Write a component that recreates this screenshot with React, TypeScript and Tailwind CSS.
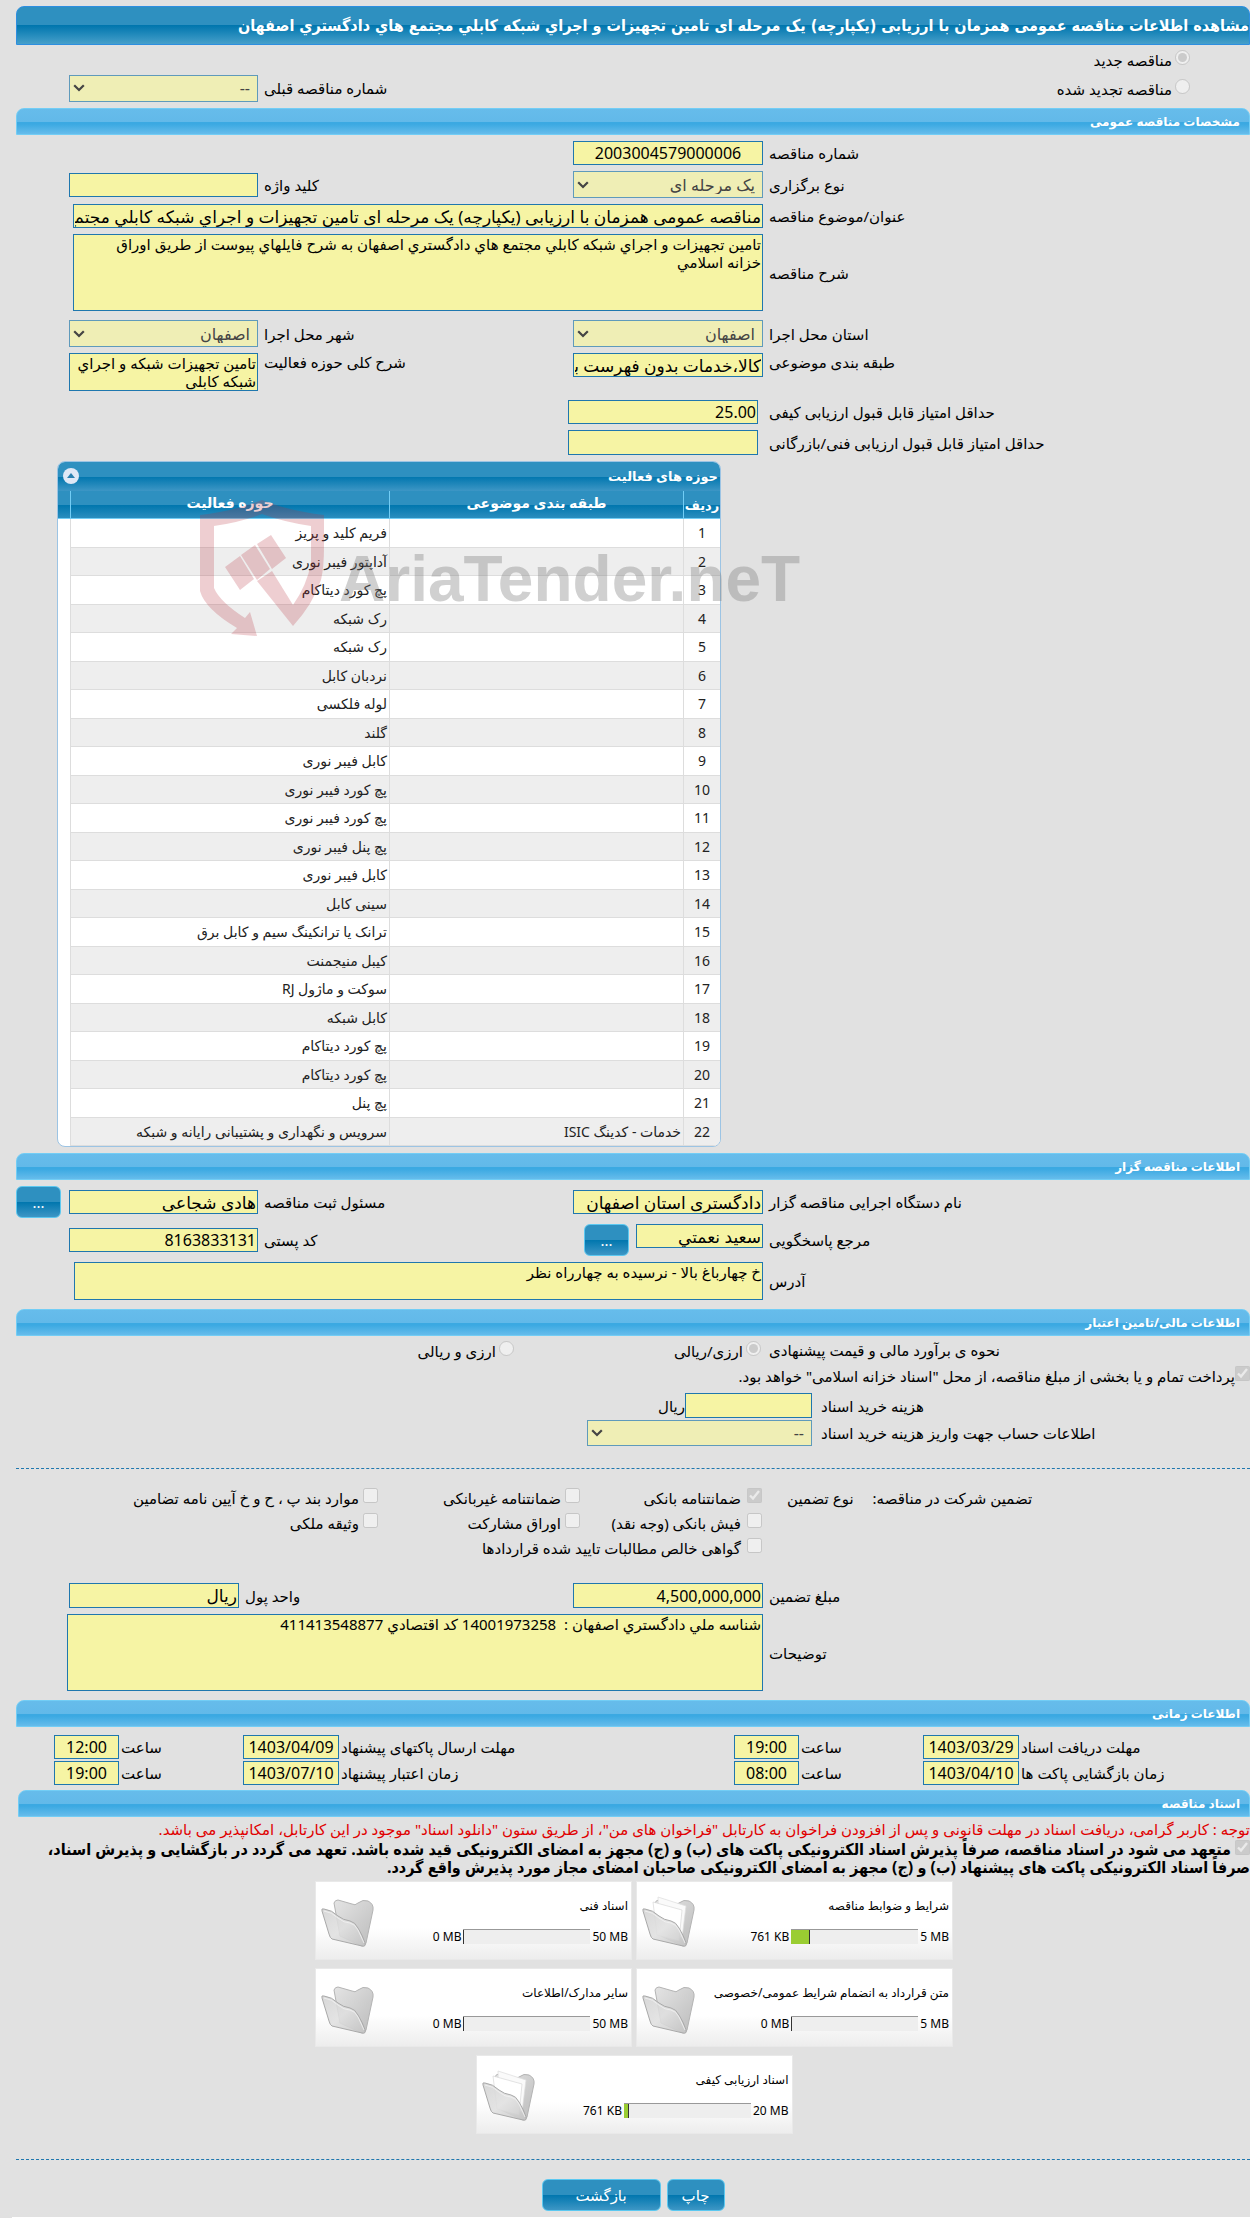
import type { ReactNode } from "react";

const FORM_GRID =
  "grid grid-cols-[minmax(0,487fr)_190px_minmax(0,315fr)_189px_53px] items-center";
const FIELD =
  "block w-full rounded-none border border-[#1f77ae] bg-[#f6f4a4] px-px text-black outline-none";
const AREA =
  "block w-full resize-none overflow-hidden rounded-none border border-[#1f77ae] bg-[#f6f4a4] ps-px pe-1.5 text-[15px] leading-[18px] text-black outline-none";
const BLUE_BUTTON =
  "h-8 rounded-md border border-[#5cc8f0] bg-[linear-gradient(#2e90c0_0,#2e90c0_50%,#0076ae_50%,#3d96c5_100%)] text-[15px] text-white";

function SectionTitle({ children, className = "" }: { children: ReactNode; className?: string }) {
  return (
    <h2
      className={`flex h-[27px] items-center rounded-t-lg border border-[#72cdf5] bg-[linear-gradient(#66bceb_0,#62b9e9_50%,#3ba9e2_52%,#3ba9e2_60%,#66bceb_100%)] px-[9px] text-[12px] font-bold text-white ${className}`}
    >
      {children}
    </h2>
  );
}

function Label({ htmlFor, children, className = "pe-1.5" }: { htmlFor: string; children: ReactNode; className?: string }) {
  return (
    <label htmlFor={htmlFor} className={`block text-end whitespace-nowrap ${className}`}>
      {children}
    </label>
  );
}

function Field({ id, value = "", className = "h-6 text-[16px]" }: { id: string; value?: string; className?: string }) {
  return <input id={id} type="text" readOnly defaultValue={value} className={`${FIELD} ${className}`} />;
}

function TextField({ id, value, className = "h-6" }: { id: string; value: string; className?: string }) {
  return <Field id={id} value={value} className={`text-[17px] ${className}`} />;
}

function Select({ id, value, className = "h-[27px]" }: { id: string; value: string; className?: string }) {
  return (
    <div className="relative">
      <select
        id={id}
        disabled
        className={`block w-full appearance-none rounded-none border border-[#5f9abb] bg-[#efeeb5] ps-[7px] pe-5 text-[16px] text-[#444] opacity-100 ${className}`}
      >
        <option>{value}</option>
      </select>
      <svg viewBox="0 0 12 8" className="pointer-events-none absolute top-1/2 left-1 h-2 w-3 -translate-y-1/2">
        <path d="M1.2 1.2 6 6l4.800-4.800" fill="none" stroke="#444" strokeWidth="2.200" />
      </svg>
    </div>
  );
}

function Choice({
  id,
  type = "checkbox",
  checked = false,
  name,
  children,
  className = "gap-1.5",
}: {
  id: string;
  type?: "checkbox" | "radio";
  checked?: boolean;
  name?: string;
  children: ReactNode;
  className?: string;
}) {
  return (
    <div className={`flex items-start whitespace-nowrap ${className}`}>
      <input id={id} name={name} type={type} disabled defaultChecked={checked} className="m-0 h-[15px] w-[15px] shrink-0" />
      <label htmlFor={id} className="pt-px leading-[18px]">
        {children}
      </label>
    </div>
  );
}

const ACTIVITIES: [string, string][] = [
  ["", "فریم کلید و پریز"],
  ["", "آداپتور فیبر نوری"],
  ["", "پچ کورد دیتاکام"],
  ["", "رک شبکه"],
  ["", "رک شبکه"],
  ["", "نردبان کابل"],
  ["", "لوله فلکسی"],
  ["", "گلند"],
  ["", "کابل فیبر نوری"],
  ["", "پچ کورد فیبر نوری"],
  ["", "پچ کورد فیبر نوری"],
  ["", "پچ پنل فیبر نوری"],
  ["", "کابل فیبر نوری"],
  ["", "سینی کابل"],
  ["", "ترانک یا ترانکینگ سیم و کابل برق"],
  ["", "کیبل منیجمنت"],
  ["", "سوکت و ماژول RJ"],
  ["", "کابل شبکه"],
  ["", "پچ کورد دیتاکام"],
  ["", "پچ کورد دیتاکام"],
  ["", "پچ پنل"],
  ["خدمات - کدینگ ISIC", "سرویس و نگهداری و پشتیبانی رایانه و شبکه"],
];

function Watermark() {
  return (
    <div dir="ltr" className="pointer-events-none absolute top-[38px] left-[142px] flex items-start" aria-hidden="true">
      <svg viewBox="0 0 128 140" className="h-[140px] w-32 shrink-0">
        <g fill="#b8323f" fillOpacity="0.24">
          <path d="M1 16Q36 12 63 1q27 11 62 15v31q0 22-3 34-8 24-28 46L58 82l15-10 21 34q14-20 18-42V27Q85 23 63 15 42 23 15 27v62q6 14 31 30l5-6 7 24-26-2 6-6Q6 110 1 92Z" />
          <path d="m26 68 15-11 14 23-14 11ZM42 56l14-10 15 24-13 11ZM58 45l14-9 15 23-14 11Z" />
        </g>
      </svg>
      <span className="mt-12 ml-3 font-['Liberation_Sans',sans-serif] text-[64px] leading-[64px] font-bold text-[#777]/35">
        AriaTender.neT
      </span>
    </div>
  );
}

function ActivityTable() {
  return (
    <div className="relative mt-1.5 mr-auto ml-[41px] w-[664px]">
      <div className="overflow-hidden rounded-lg border border-[#9cc4e4] bg-white">
        <div className="flex h-[29px] items-center justify-between bg-[linear-gradient(#2e90c0_0,#2e90c0_50%,#0076ae_50%,#3d96c5_100%)] ps-0.5 pe-[5px] pb-0.5 text-[13px] font-bold text-white">
          <span>حوزه های فعالیت</span>
          <button type="button" aria-label="بستن جدول" className="flex h-4 w-4 items-center justify-center rounded-full bg-[#dfe8f6]">
            <svg viewBox="0 0 8 5" className="h-[5px] w-2">
              <path d="M4 0 8 5H0Z" fill="#2a80b0" />
            </svg>
          </button>
        </div>
        <table className="w-full table-fixed border-separate border-spacing-0">
          <colgroup>
            <col className="w-[37px]" />
            <col className="w-[294px]" />
            <col />
            <col className="w-3" />
          </colgroup>
          <thead>
            <tr className="h-7 bg-[linear-gradient(#2e90c0_0,#2e90c0_50%,#0076ae_50%,#2e90c0_100%)] text-[14px] leading-4 text-white">
              <th className="border-b border-l border-[#72cdf5] p-0 text-[13px] font-bold">ردیف</th>
              <th className="border-b border-l border-[#72cdf5] p-0 pb-1 font-bold">طبقه بندی موضوعی</th>
              <th className="border-b border-l border-[#72cdf5] p-0 pb-1 font-bold">حوزه فعالیت</th>
              <th className="border-b border-[#72cdf5] p-0" />
            </tr>
          </thead>
          <tbody className="text-[14px] leading-4 text-[#222]">
            {ACTIVITIES.map(([category, activity], i) => {
              const cell = `border-b border-l border-[#ddd] p-0 ${i % 2 === 1 ? "bg-[#eee]" : "bg-white"}`;
              return (
                <tr key={i} className="h-[29px] even:h-7">
                  <td className={`${cell} text-center`}>{i + 1}</td>
                  <td className={`${cell} px-0.5`}>{category}</td>
                  <td className={`${cell} px-0.5`}>{activity}</td>
                  <td className="p-0" />
                </tr>
              );
            })}
          </tbody>
        </table>
      </div>
      <Watermark />
    </div>
  );
}

function Folder({ full }: { full: boolean }) {
  return (
    <svg viewBox="0 0 58 54" className="h-[54px] w-[58px] shrink-0">
      <defs>
        <linearGradient id="folder-back" x1="0" y1="0" x2="1" y2="1">
          <stop offset="0" stopColor="#e4e4e4" />
          <stop offset="1" stopColor="#bcbcbc" />
        </linearGradient>
        <linearGradient id="folder-front" x1="0" y1="0" x2="1" y2="1">
          <stop offset="0" stopColor="#d2d2d2" />
          <stop offset="0.500" stopColor="#e0e0e0" />
          <stop offset="1" stopColor="#c4c4c4" />
        </linearGradient>
      </defs>
      <path
        d="M14 9q1-3 4-3l14 4q3 2 6-1 5-4 10-2 6 3 5 9l-7 33q-1 3-4 3L20 42Z"
        fill="url(#folder-back)"
        stroke="#b4b4b4"
      />
      {full && (
        <>
          <path d="m17 3 28 9-4 32-23-6Z" fill="#fafafa" stroke="#dcdcdc" strokeWidth="0.700" />
          <path d="m12 8 29 8-3 31-22-6Z" fill="#fff" stroke="#d9d9d9" strokeWidth="0.700" />
        </>
      )}
      <path
        d="M2 17q-1-3 2-2 8 1 14 7 5 4 12 5 5 1 8 7 5 8 7 15 1 4-3 3L12 45q-2-1-3-5Z"
        fill="url(#folder-front)"
        fillOpacity="0.880"
        stroke="#a9a9a9"
      />
      <path d="M4 17q8 1 14 7 6 5 12 5 5 1 8 7l6 13" fill="none" stroke="#f2f2f2" strokeWidth="0.800" />
    </svg>
  );
}

function DocumentCard({ title, used, total, percent }: { title: string; used: string; total: string; percent: number }) {
  return (
    <div className="flex h-[79px] w-[317px] items-center justify-between border border-[#e9e9e9] bg-[linear-gradient(#fff_0,#fff_60%,#ededed_100%)] ps-[3px] pe-1 text-[12px]">
      <div className="flex flex-col gap-3.5">
        <span className="leading-[18px]">{title}</span>
        <div dir="ltr" className="flex items-center justify-end gap-0.5 leading-4">
          <span>{used}</span>
          <div
            role="progressbar"
            aria-label={title}
            aria-valuenow={percent}
            className="h-[15px] w-[127px] border-t border-[#999] bg-[#eee]"
          >
            <div className="h-full min-w-px border-r border-[#333] bg-[#9acd32]" style={{ width: `${percent}%` }} />
          </div>
          <span>{total}</span>
        </div>
      </div>
      <Folder full={percent > 0} />
    </div>
  );
}

function Deadline({ id, label, date, time }: { id: string; label: string; date: string; time: string }) {
  return (
    <>
      <Label htmlFor={`${id}-date`} className="pe-0.5">
        {label}
      </Label>
      <Field id={`${id}-date`} value={date} className="h-6 text-center text-[16px]" />
      <Label htmlFor={`${id}-time`} className="pe-0.5">
        ساعت
      </Label>
      <Field id={`${id}-time`} value={time} className="h-6 text-center text-[16px]" />
    </>
  );
}

export default function App() {
  return (
    <main
      dir="rtl"
      lang="fa"
      className="overflow-hidden bg-[#e1e1e1] pt-1.5 pl-4 font-['Noto_Sans','DejaVu_Sans',sans-serif] text-[15px] leading-[18px] text-black"
    >
      <h1 className="flex h-[39px] items-center overflow-hidden rounded-t-lg border border-[#2d8ee0] bg-[linear-gradient(#2e90c0_0,#2e90c0_50%,#0076ae_50%,#469fca_100%)] font-['DejaVu_Sans_Condensed','DejaVu_Sans',sans-serif] text-[16px] font-bold whitespace-nowrap text-white">
        مشاهده اطلاعات مناقصه عمومی همزمان با ارزیابی (یکپارچه) یک مرحله ای تامین تجهیزات و اجراي شبکه کابلي مجتمع هاي دادگستري اصفهان
      </h1>

      <div className={`${FORM_GRID} h-[29px]`}>
        <div className="ps-[60px]">
          <Choice id="new" type="radio" name="kind" checked className="gap-[3px]">
            مناقصه جدید
          </Choice>
        </div>
      </div>
      <div className={`${FORM_GRID} h-7`}>
        <div className="ps-[60px]">
          <Choice id="renewed" type="radio" name="kind" className="gap-[3px]">
            مناقصه تجدید شده
          </Choice>
        </div>
        <Label htmlFor="previous" className="col-span-2 pe-1.5">
          شماره مناقصه قبلی
        </Label>
        <Select id="previous" value="--" />
      </div>

      <SectionTitle className="mt-1.5">مشخصات مناقصه عمومی</SectionTitle>
      <div className="mt-1.5 flex flex-col gap-1.5">
        <div className={FORM_GRID}>
          <Label htmlFor="number">شماره مناقصه</Label>
          <Field id="number" value="2003004579000006" className="h-6 text-center text-[16px]" />
        </div>
        <div className={FORM_GRID}>
          <Label htmlFor="method">نوع برگزاری</Label>
          <Select id="method" value="یک مرحله ای" />
          <Label htmlFor="keyword">کلید واژه</Label>
          <Field id="keyword" />
        </div>
        <div className={FORM_GRID}>
          <Label htmlFor="subject">عنوان/موضوع مناقصه</Label>
          <div className="col-span-3 pl-1">
            <TextField
              id="subject"
              value="مناقصه عمومی همزمان با ارزیابی (یکپارچه) یک مرحله ای تامین تجهیزات و اجراي شبکه کابلي مجتمع هاي دادگستري اصفهان"
            />
          </div>
        </div>
        <div className={FORM_GRID}>
          <Label htmlFor="description">شرح مناقصه</Label>
          <div className="col-span-3 pl-1">
            <textarea
              id="description"
              readOnly
              className={`${AREA} h-[77px]`}
              defaultValue="تامین تجهیزات و اجراي شبکه کابلي مجتمع هاي دادگستري اصفهان به شرح فایلهاي پیوست از طریق اوراق خزانه اسلامي"
            />
          </div>
        </div>
        <div className={`${FORM_GRID} mt-[3px]`}>
          <Label htmlFor="province">استان محل اجرا</Label>
          <Select id="province" value="اصفهان" />
          <Label htmlFor="city">شهر محل اجرا</Label>
          <Select id="city" value="اصفهان" />
        </div>
        <div className={`${FORM_GRID} items-start`}>
          <Label htmlFor="category">طبقه بندی موضوعی</Label>
          <TextField id="category" value="کالا،خدمات بدون فهرست بها" />
          <Label htmlFor="scope">شرح کلی حوزه فعالیت</Label>
          <textarea id="scope" readOnly className={`${AREA} h-[38px]`} defaultValue="تامین تجهیزات شبکه و اجراي شبکه کابلي" />
        </div>
        <div className={`${FORM_GRID} mt-[3px]`}>
          <Label htmlFor="quality">حداقل امتیاز قابل قبول ارزیابی کیفی</Label>
          <div className="-ml-[5px] pr-[5px]">
            <Field id="quality" value="25.00" />
          </div>
        </div>
        <div className={FORM_GRID}>
          <Label htmlFor="technical">حداقل امتیاز قابل قبول ارزیابی فنی/بازرگانی</Label>
          <div className="-ml-[5px] pr-[5px]">
            <Field id="technical" className="h-[25px]" />
          </div>
        </div>
      </div>

      <ActivityTable />

      <SectionTitle className="mt-1.5">اطلاعات مناقصه گزار</SectionTitle>
      <div className="mt-1.5 flex flex-col gap-1.5">
        <div className={FORM_GRID}>
          <Label htmlFor="agency">نام دستگاه اجرایی مناقصه گزار</Label>
          <TextField id="agency" value="دادگستری استان اصفهان" />
          <Label htmlFor="registrar">مسئول ثبت مناقصه</Label>
          <TextField id="registrar" value="هادی شجاعی" />
          <button type="button" className={`${BLUE_BUTTON} mr-2 w-[45px]`}>
            ...
          </button>
        </div>
        <div className={FORM_GRID}>
          <Label htmlFor="contact">مرجع پاسخگویی</Label>
          <div className="flex items-start gap-[7px]">
            <div className="w-[127px]">
              <TextField id="contact" value="سعید نعمتي" />
            </div>
            <button type="button" className={`${BLUE_BUTTON} w-[45px]`}>
              ...
            </button>
          </div>
          <Label htmlFor="postal">کد پستی</Label>
          <Field id="postal" value="8163833131" />
        </div>
        <div className={FORM_GRID}>
          <Label htmlFor="address">آدرس</Label>
          <div className="col-span-3 pl-[5px]">
            <textarea id="address" readOnly className={`${AREA} h-[38px]`} defaultValue="خ چهارباغ بالا - نرسیده به چهارراه نظر" />
          </div>
        </div>
      </div>

      <SectionTitle className="mt-[9px]">اطلاعات مالی/تامین اعتبار</SectionTitle>
      <div className={`${FORM_GRID} h-7`}>
        <span className="pe-1.5 text-end">نحوه ی برآورد مالی و قیمت پیشنهادی</span>
        <Choice id="single-currency" type="radio" name="currency" checked className="gap-[3px] ps-0.5">
          ارزی/ریالی
        </Choice>
        <div className="ps-[59px]">
          <Choice id="multi-currency" type="radio" name="currency" className="gap-[3px]">
            ارزی و ریالی
          </Choice>
        </div>
      </div>
      <div className="h-[29px] pt-0.5">
        <Choice id="bonds" checked className="gap-0">
          پرداخت تمام و یا بخشی از مبلغ مناقصه، از محل "اسناد خزانه اسلامی" خواهد بود.
        </Choice>
      </div>
      <div className="grid grid-cols-[minmax(0,438fr)_225px_minmax(0,571fr)] items-center gap-y-0.5">
        <Label htmlFor="cost" className="pe-[9px]">
          هزینه خرید اسناد
        </Label>
        <div className="flex items-center">
          <div className="w-[127px]">
            <Field id="cost" className="h-[25px]" />
          </div>
          <span>ریال</span>
        </div>
        <span />
        <Label htmlFor="account" className="pe-[9px]">
          اطلاعات حساب جهت واریز هزینه خرید اسناد
        </Label>
        <Select id="account" value="--" className="h-[26px]" />
      </div>
      <hr className="mt-[22px] border-t border-dashed border-[#1f77ae]" />

      <div className="grid grid-cols-[minmax(0,487fr)_minmax(0,747fr)] pt-[19px]">
        <div className="flex justify-end gap-[19px] pe-6 pt-px">
          <span>تضمین شرکت در مناقصه:</span>
          <span>نوع تضمین</span>
        </div>
        <div className="grid auto-rows-[25px] grid-cols-[182px_202px_1fr] ps-px">
          <Choice id="g1" checked>
            ضمانتنامه بانکی
          </Choice>
          <Choice id="g2" className="gap-1">
            ضمانتنامه غیربانکی
          </Choice>
          <Choice id="g3" className="gap-1">
            موارد بند پ ، ح و خ آیین نامه تضامین
          </Choice>
          <Choice id="g4">فیش بانکی (وجه نقد)</Choice>
          <Choice id="g5" className="gap-1">
            اوراق مشارکت
          </Choice>
          <Choice id="g6" className="gap-1">
            وثیقه ملکی
          </Choice>
          <Choice id="g7" className="col-span-3 gap-1.5">
            گواهی خالص مطالبات تایید شده قراردادها
          </Choice>
        </div>
      </div>

      <div className="mt-5 grid grid-cols-[minmax(0,487fr)_190px_minmax(0,334fr)_170px_53px] items-center">
        <Label htmlFor="amount">مبلغ تضمین</Label>
        <Field id="amount" value="4,500,000,000" className="h-[25px] text-[16px]" />
        <Label htmlFor="unit">واحد پول</Label>
        <TextField id="unit" value="ریال" className="h-[25px]" />
      </div>
      <div className="mt-1.5 grid grid-cols-[minmax(0,487fr)_minmax(0,696fr)_51px] items-center">
        <Label htmlFor="notes">توضیحات</Label>
        <textarea
          id="notes"
          readOnly
          className={`${AREA} h-[77px]`}
          defaultValue="شناسه ملي دادگستري اصفهان :  14001973258 کد اقتصادي 411413548877"
        />
      </div>

      <SectionTitle className="mt-[9px]">اطلاعات زمانی</SectionTitle>
      <div className="mt-2 grid grid-cols-[minmax(0,231fr)_96px_minmax(0,124fr)_65px_minmax(0,395fr)_96px_minmax(0,124fr)_65px_38px] items-center gap-y-0.5">
        <Deadline id="receive" label="مهلت دریافت اسناد" date="1403/03/29" time="19:00" />
        <Deadline id="send" label="مهلت ارسال پاکتهای پیشنهاد" date="1403/04/09" time="12:00" />
        <span />
        <Deadline id="open" label="زمان بازگشایی پاکت ها" date="1403/04/10" time="08:00" />
        <Deadline id="valid" label="زمان اعتبار پیشنهاد" date="1403/07/10" time="19:00" />
      </div>

      <div className="ml-0.5">
        <SectionTitle className="mt-[5px]">اسناد مناقصه</SectionTitle>
        <p className="pt-[3px] text-[#e00000]">
          توجه : کاربر گرامی، دریافت اسناد در مهلت قانونی و پس از افزودن فراخوان به کارتابل "فراخوان های من"، از طریق ستون "دانلود اسناد" موجود در این کارتابل، امکانپذیر می باشد.
        </p>
        <div className="mt-0.5 font-['Noto_Sans','DejaVu_Sans_Condensed','DejaVu_Sans',sans-serif] text-[16px] font-bold">
          <input id="commit" type="checkbox" disabled defaultChecked className="m-0 me-1 h-[15px] w-[15px]" />
          <label htmlFor="commit">
            متعهد می شود در اسناد مناقصه، صرفاً پذیرش اسناد الکترونیکی پاکت های (ب) و (ج) مجهز به امضای الکترونیکی قید شده باشد. تعهد می گردد در بازگشایی و پذیرش اسناد، صرفاً اسناد الکترونیکی پاکت های پیشنهاد (ب) و (ج) مجهز به امضای الکترونیکی صاحبان امضای مجاز مورد پذیرش واقع گردد.
          </label>
        </div>

        <div className="mt-[5px] flex flex-col items-center gap-2">
          <div className="grid grid-cols-[317px_317px] gap-x-1 gap-y-2">
            <DocumentCard title="شرایط و ضوابط مناقصه" used="761 KB" total="5 MB" percent={15} />
            <DocumentCard title="اسناد فنی" used="0 MB" total="50 MB" percent={0} />
            <DocumentCard title="متن قرارداد به انضمام شرایط عمومی/خصوصی" used="0 MB" total="5 MB" percent={0} />
            <DocumentCard title="سایر مدارک/اطلاعات" used="0 MB" total="50 MB" percent={0} />
          </div>
          <DocumentCard title="اسناد ارزیابی کیفی" used="761 KB" total="20 MB" percent={4} />
        </div>
      </div>

      <hr className="mt-[25px] border-t border-dashed border-[#1f77ae]" />
      <div className="mt-[19px] flex justify-center gap-1.5 pb-1.5">
        <button type="button" className={`${BLUE_BUTTON} w-[58px]`}>
          چاپ
        </button>
        <button type="button" className={`${BLUE_BUTTON} w-[119px]`}>
          بازگشت
        </button>
      </div>
      <div className="-ml-1 h-px bg-white" />
    </main>
  );
}
